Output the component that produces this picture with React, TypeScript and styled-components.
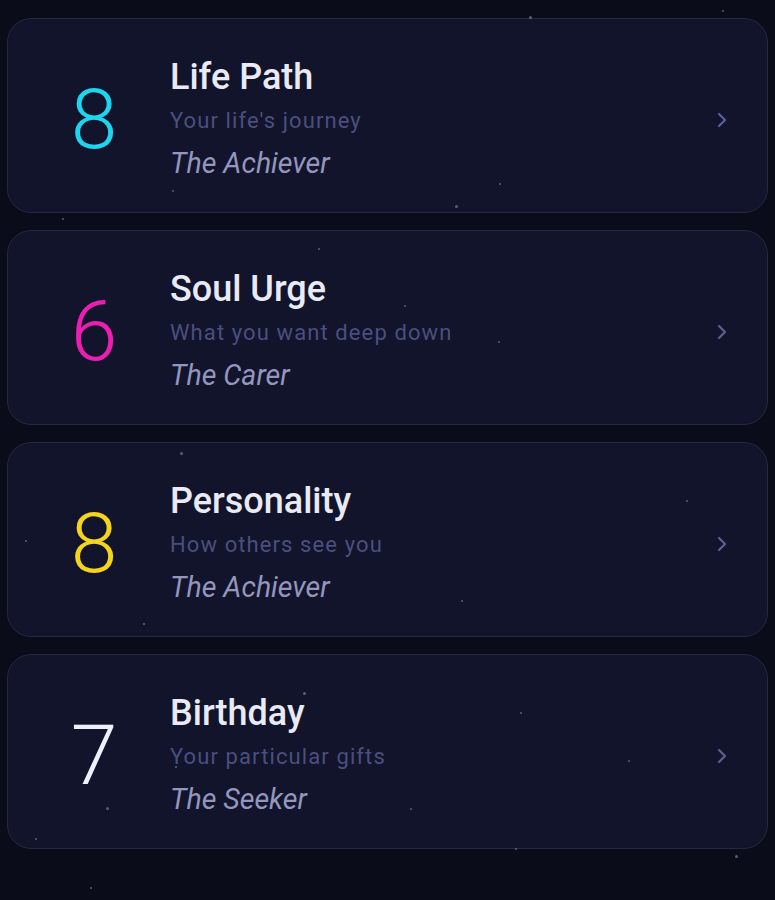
import React from 'react';
import styled, { createGlobalStyle } from 'styled-components';

const GlobalStyle = createGlobalStyle`
    html, body {
        margin: 0;
        padding: 0;
        background: #0a0c1a;
    }
    body {
        font-family: Roboto, "Noto Sans", "Liberation Sans", sans-serif;
    }
`;

interface Reading {
    value: number;
    title: string;
    subtitle: string;
    trait: string;
    color: string;
}

const readings: Reading[] = [
    { value: 8, title: 'Life Path', subtitle: "Your life's journey", trait: 'The Achiever', color: '#1cd6f0' },
    { value: 6, title: 'Soul Urge', subtitle: 'What you want deep down', trait: 'The Carer', color: '#ec1eb2' },
    { value: 8, title: 'Personality', subtitle: 'How others see you', trait: 'The Achiever', color: '#f4d41c' },
    { value: 7, title: 'Birthday', subtitle: 'Your particular gifts', trait: 'The Seeker', color: '#eef0fb' },
];

const stars: [number, number, number][] = [
    [529, 16, 3], [722, 10, 2], [455, 205, 3], [499, 183, 2], [172, 190, 2],
    [62, 218, 2], [180, 452, 3], [686, 500, 2], [143, 623, 2], [106, 807, 3],
    [303, 692, 3], [735, 855, 3], [515, 848, 2], [410, 808, 2], [35, 838, 2],
    [461, 600, 2], [25, 540, 2], [175, 766, 2], [628, 760, 2], [520, 712, 2],
    [318, 248, 2], [404, 305, 2], [498, 341, 2], [90, 887, 2],
];

const Page = styled.div`
    position: relative;
    min-height: 900px;
    box-sizing: border-box;
    padding: 18px 7px 0 7px;
    display: flex;
    flex-direction: column;
    gap: 17px;
    overflow: hidden;
`;

const Card = styled.div`
    display: flex;
    align-items: center;
    height: 195px;
    box-sizing: border-box;
    padding-top: 8px;
    border: 1.5px solid #242840;
    border-radius: 24px;
    background: #11142a;
`;

const NumberBox = styled.div<{ $color: string }>`
    width: 130px;
    margin-left: 21px;
    flex: none;
    text-align: center;
    font-size: 84px;
    font-weight: 300;
    line-height: 1;
    color: ${(p) => p.$color};
`;

const TextBlock = styled.div`
    flex: 1;
    margin-left: 11px;
    display: flex;
    flex-direction: column;
`;

const Title = styled.div`
    font-size: 36px;
    line-height: 40px;
    font-weight: 500;
    color: #e9eaf6;
`;

const Subtitle = styled.div`
    margin-top: 9px;
    font-size: 22px;
    line-height: 30px;
    letter-spacing: 1.1px;
    color: #4b4f7f;
`;

const Trait = styled.div`
    margin-top: 10px;
    font-size: 28.5px;
    line-height: 36px;
    font-style: italic;
    color: #9496be;
`;

const Chevron = styled.svg`
    flex: none;
    margin-right: 40px;
`;

const Star = styled.span`
    position: absolute;
    border-radius: 50%;
    background: #7a7d9c;
    opacity: 0.7;
    pointer-events: none;
`;

export default function App() {
    return (
        <>
            <GlobalStyle />
            <Page>
                {readings.map((r) => (
                    <Card key={r.title}>
                        <NumberBox $color={r.color}>{r.value}</NumberBox>
                        <TextBlock>
                            <Title>{r.title}</Title>
                            <Subtitle>{r.subtitle}</Subtitle>
                            <Trait>{r.trait}</Trait>
                        </TextBlock>
                        <Chevron width="10" height="16" viewBox="0 0 10 16">
                            <path d="M2 2 L8 8 L2 14" fill="none" stroke="#5b5f96" strokeWidth="2.2" strokeLinecap="round" strokeLinejoin="round" />
                        </Chevron>
                    </Card>
                ))}
                {stars.map(([x, y, s], i) => (
                    <Star key={i} style={{ left: x, top: y, width: s, height: s }} />
                ))}
            </Page>
        </>
    );
}
